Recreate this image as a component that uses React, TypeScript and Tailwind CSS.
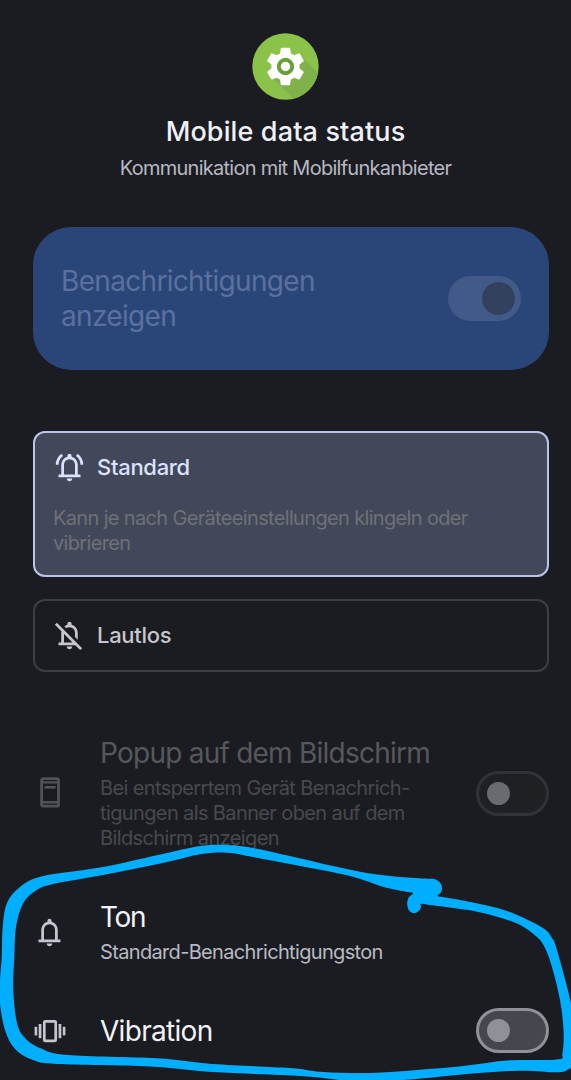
import clsx from 'clsx'

type Point = [number, number]

// Closed smooth curve through a list of points
function smoothPath(points: Point[]) {
  const n = points.length
  let d = `M${points[0][0]} ${points[0][1]}`
  for (let i = 0; i < n; i++) {
    const p0 = points[(i - 1 + n) % n]
    const p1 = points[i]
    const p2 = points[(i + 1) % n]
    const p3 = points[(i + 2) % n]
    const c1 = [p1[0] + (p2[0] - p0[0]) / 6, p1[1] + (p2[1] - p0[1]) / 6]
    const c2 = [p2[0] - (p3[0] - p1[0]) / 6, p2[1] - (p3[1] - p1[1]) / 6]
    d += `C${c1[0]} ${c1[1]} ${c2[0]} ${c2[1]} ${p2[0]} ${p2[1]}`
  }
  return d + 'Z'
}

const outerEdge: Point[] = [
  [434, 878.9], [428, 878.7], [400, 877], [367, 873], [333, 866], [290, 856], [253, 848], [227, 845], [200, 846],
  [167, 853], [103, 867], [43, 876], [20, 887], [7, 903], [2.7, 927], [1.7, 957], [0, 980],
  [0, 1003], [5, 1030], [15, 1049], [33, 1060], [57, 1064], [150, 1066.5], [213, 1072], [290, 1075.5],
  [323, 1078], [353, 1081], [403, 1080], [467, 1074], [520, 1070.7], [557, 1072.3], [568, 1069.5], [574, 1062],
  [574, 1030], [571, 1003], [557, 950], [552, 938], [542, 927.5], [507, 911], [473, 902.5], [446, 897.5],
  [437.8, 896], [440.8, 892.5], [442, 887.5], [439.5, 882],
]

const innerEdge: Point[] = [
  [413, 893.2], [409, 897], [407.2, 903], [408.5, 909.5], [412, 912.8], [416, 912.8], [420, 909.5], [421, 906], [420.5, 903.8],
  [430, 905], [457, 908.5], [483, 913], [517, 923.5], [537, 937], [545, 948], [552, 967], [560, 1000], [563.5, 1030],
  [562.5, 1053], [557, 1059.5], [510, 1060.3], [463, 1066], [417, 1070], [370, 1073], [323, 1072], [290, 1068],
  [213, 1064], [157, 1058.3], [67, 1055], [40, 1048], [25, 1038], [17, 1023], [13.3, 990], [14.3, 957],
  [16, 927], [23, 903.5], [36, 890.5], [53, 884], [103, 875], [167, 862], [200, 854.3], [227, 852.7],
  [253, 857], [290, 864], [350, 876], [383, 886.8], [406, 891.8],
]

function Scribble() {
  return (
    <svg className="absolute inset-0 pointer-events-none" width="571" height="1080" viewBox="0 0 571 1080">
      <path fill="#00aeff" fillRule="evenodd" d={smoothPath(outerEdge) + smoothPath(innerEdge)} />
    </svg>
  )
}

const BELL =
  'M160-200v-80h80v-280q0-83 50-147.5T420-792v-28q0-25 17.5-42.5T480-880t42.5 17.5T540-820v28q80 20 130 84.5T720-560v280h80v80H160Zm320 120q-33 0-56.5-23.5T400-160h160q0 33-23.5 56.5T480-80ZM320-280h320v-280q0-66-47-113t-113-47q-66 0-113 47t-47 113v280Z'
const BELL_WAVES =
  'M80-560q0-100 44.5-183.5T244-882l47 64q-60 44-95.5 111T160-560H80Zm720 0q0-80-35.5-147T669-818l47-64q75 55 119.5 138.5T880-560h-80Z'
const BELL_OFF =
  'M160-200v-80h80v-280q0-33 8.5-65t25.5-61l60 60q-7 16-10.5 32.5T320-560v280h248L56-792l56-56 736 736-56 56-146-144H160Zm560-154-80-80v-126q0-66-47-113t-113-47q-26 0-50 8t-44 24l-58-58q20-16 43-28t49-18v-28q0-25 17.5-42.5T480-880t42.5 17.5T540-820v28q80 20 130 84.5T720-560v206ZM480-80q-33 0-56.5-23.5T400-160h160q0 33-23.5 56.5T480-80Z'

function Symbol({ d, className }: { d: string; className?: string }) {
  return (
    <svg className={clsx('shrink-0', className)} width="33" height="33" viewBox="0 -960 960 960" fill="currentColor">
      <path d={d} />
    </svg>
  )
}

function PopupIcon() {
  return (
    <svg width="34" height="34" viewBox="0 0 34 34" fill="none" stroke="currentColor" strokeWidth="2.8">
      <rect x="8.6" y="1.6" width="16.9" height="27.6" rx="1.8" />
      <path d="M8 5.4h18M8 25.2h18" strokeWidth="2.4" />
      <path d="M11.6 10.3h11" strokeWidth="2.6" />
    </svg>
  )
}

function VibrationIcon() {
  return (
    <svg width="34" height="34" viewBox="0 0 34 34" fill="currentColor">
      <rect x="11.3" y="7.3" width="11.4" height="19.6" rx="1" fill="none" stroke="currentColor" strokeWidth="2.7" />
      <rect x="1.6" y="12.8" width="2.6" height="8.6" />
      <rect x="5.7" y="10" width="2.7" height="14.2" />
      <rect x="25.6" y="10" width="2.7" height="14.2" />
      <rect x="29.8" y="12.8" width="2.6" height="8.6" />
    </svg>
  )
}

function AppIcon() {
  return (
    <svg width="67" height="67" viewBox="0 0 67 67">
      <defs>
        <clipPath id="disc">
          <circle cx="33.5" cy="33.5" r="33.2" />
        </clipPath>
      </defs>
      <circle cx="33.5" cy="33.5" r="33.2" fill="#8bc34a" />
      <path clipPath="url(#disc)" d="M49 23l30 30v26H55L19 44z" fill="#7fb249" />
      <path
        transform="translate(10.9 10.9) scale(1.88)"
        fill="#fff"
        d="M19.43 12.98c.04-.32.07-.64.07-.98s-.03-.66-.07-.98l2.11-1.65c.19-.15.24-.42.12-.64l-2-3.46c-.12-.22-.39-.3-.61-.22l-2.49 1c-.52-.4-1.08-.73-1.69-.98l-.38-2.65C14.46 2.18 14.25 2 14 2h-4c-.25 0-.46.18-.49.42l-.38 2.65c-.61.25-1.17.59-1.69.98l-2.49-1c-.23-.09-.49 0-.61.22l-2 3.46c-.13.22-.07.49.12.64l2.11 1.65c-.04.32-.07.65-.07.98s.03.66.07.98l-2.11 1.65c-.19.15-.24.42-.12.64l2 3.46c.12.22.39.3.61.22l2.49-1c.52.4 1.08.73 1.69.98l.38 2.65c.03.24.24.42.49.42h4c.25 0 .46-.18.49-.42l.38-2.65c.61-.25 1.17-.59 1.69-.98l2.49 1c.23.09.49 0 .61-.22l2-3.46c.12-.22.07-.49-.12-.64l-2.11-1.65z"
      />
      <circle cx="33.5" cy="33.5" r="6.7" fill="#fff" stroke="#689f38" strokeWidth="3.9" />
    </svg>
  )
}

function OffSwitch({ disabled }: { disabled?: boolean }) {
  return (
    <div
      className={clsx(
        'shrink-0 w-[73px] h-[45px] rounded-full border-[3px] flex items-center pl-2',
        disabled ? 'border-[#313237] bg-[#1f2024]' : 'border-[#8f9099] bg-[#45474f]'
      )}
    >
      <div className={clsx('size-[23px] rounded-full', disabled ? 'bg-[#6a6b70]' : 'bg-[#8f9099]')} />
    </div>
  )
}

export default function App() {
  return (
    <div className="relative w-[571px] h-[1080px] overflow-hidden bg-[#1b1c21] pl-[33px] pr-[22px] font-['Inter',sans-serif] whitespace-nowrap">
      {/* Header */}
      <header className="-ml-[11px] pt-[33px] flex flex-col items-center">
        <AppIcon />
        <h1 className="mt-4 text-[27px] leading-8 font-medium tracking-[0.13px] text-[#f0f0f7]">Mobile data status</h1>
        <p className="mt-2 text-[20px] leading-[25px] tracking-[-0.73px] text-[#b7b8c1]">Kommunikation mit Mobilfunkanbieter</p>
      </header>

      {/* Main toggle */}
      <section className="mt-[46px] h-[143px] rounded-[38px] bg-[#2a4678] px-7 flex items-center justify-between">
        <p className="text-[28px] leading-[35px] tracking-[-0.68px] text-[#5a719f]">
          Benachrichtigungen
          <br />
          anzeigen
        </p>
        <div className="w-[73px] h-[45px] rounded-full bg-[#425a87] flex items-center justify-end pr-1.5">
          <div className="size-[33px] rounded-full bg-[#33415f]" />
        </div>
      </section>

      {/* Importance */}
      <section className="mt-[61px] h-[146px] rounded-xl border-2 border-[#bcc5e6] bg-[#42475a] px-[18px] pt-[18px]">
        <div className="flex items-center gap-[11px] text-[#dae2ff]">
          <Symbol d={BELL + BELL_WAVES} />
          <span className="-mt-0.5 text-[22px] leading-8 font-medium tracking-[-0.3px]">Standard</span>
        </div>
        <p className="mt-[22px] text-[20px] leading-[25px] tracking-[-0.66px] text-[#6f7178]">
          Kann je nach Geräteeinstellungen klingeln oder
          <br />
          vibrieren
        </p>
      </section>
      <section className="mt-[22px] h-[73px] rounded-xl border-2 border-[#3d3e42] px-[18px] flex items-center gap-[11px] text-[#c6c6cc]">
        <Symbol d={BELL_OFF} />
        <span className="-mt-0.5 text-[22px] leading-8 font-medium tracking-[-0.3px]">Lautlos</span>
      </section>

      {/* Details */}
      <div className="mt-16 h-[115px] flex items-center">
        <div className="w-[67px] text-[#515257]">
          <PopupIcon />
        </div>
        <div className="flex-1">
          <p className="text-[28px] leading-[34px] tracking-[-0.76px] text-[#57585c]">Popup auf dem Bildschirm</p>
          <p className="mt-1.5 text-[20px] leading-[25px] tracking-[-0.62px] text-[#48494d]">
            Bei entsperrtem Gerät Benachrich-
            <br />
            tigungen als Banner oben auf dem
            <br />
            Bildschirm anzeigen
          </p>
        </div>
        <OffSwitch disabled />
      </div>
      <div className="mt-[49px] h-[65px] flex items-center">
        <div className="w-[67px] text-[#c5c5d0]">
          <Symbol d={BELL} />
        </div>
        <div>
          <p className="text-[28px] leading-[34px] tracking-[-1.4px] text-[#f2f2f8]">Ton</p>
          <p className="mt-1.5 text-[20px] leading-[25px] tracking-[-0.66px] text-[#b9bac3]">Standard-Benachrichtigungston</p>
        </div>
      </div>
      <div className="mt-[43px] h-[45px] flex items-center">
        <div className="w-[67px] text-[#c5c5d0]">
          <VibrationIcon />
        </div>
        <p className="flex-1 text-[28px] leading-[34px] tracking-[-0.7px] text-[#f2f2f8]">Vibration</p>
        <OffSwitch />
      </div>

      <Scribble />
    </div>
  )
}
